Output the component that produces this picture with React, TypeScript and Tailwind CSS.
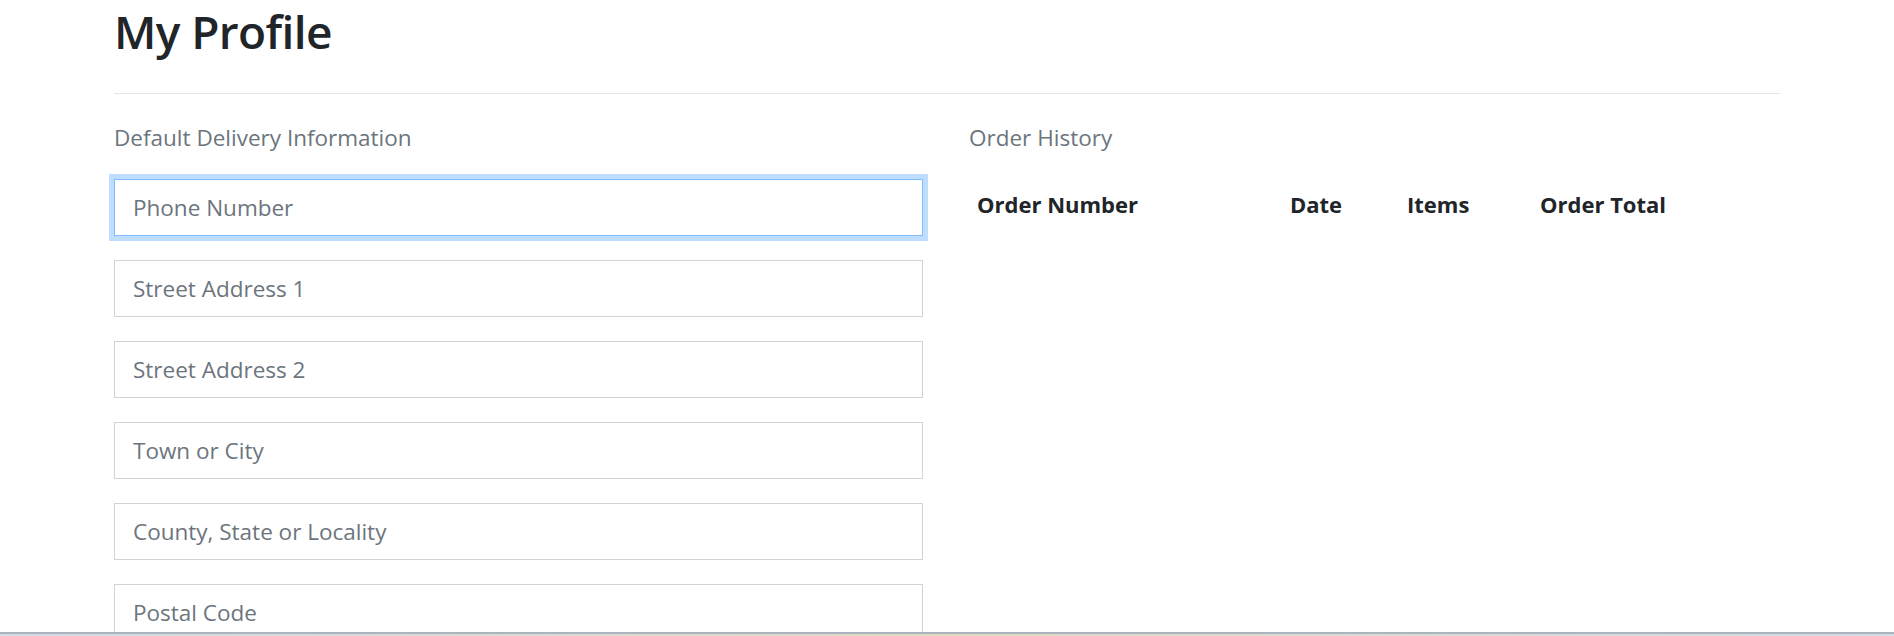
import { useState } from "react";

const fields = [
  "Phone Number",
  "Street Address 1",
  "Street Address 2",
  "Town or City",
  "County, State or Locality",
  "Postal Code",
];

export default function App() {
  const [values, setValues] = useState<Record<string, string>>({});

  return (
    <main className="relative h-screen overflow-hidden bg-white pt-[3px] font-['Open_Sans','Liberation_Sans',sans-serif] text-[#212529]">
      <section className="mx-auto w-[1666px]">
        <h1 className="text-[46px] font-semibold leading-[56px] tracking-[-0.6px]">
          My Profile
        </h1>
        <hr className="mt-[34px] border-0 border-t border-[#e6e6e6]" />

        <div className="mt-[29px] grid grid-cols-[809px_1fr] gap-x-[46px]">
          <div>
            <p className="text-[22.5px] leading-[30px] text-[#6c757d]">
              Default Delivery Information
            </p>
            <form className="mt-[26px] flex flex-col gap-6">
              {fields.map((name, i) => (
                <input
                  key={name}
                  type="text"
                  autoFocus={i === 0}
                  placeholder={name}
                  value={values[name] ?? ""}
                  onChange={(e) =>
                    setValues((v) => ({ ...v, [name]: e.target.value }))
                  }
                  className={
                    i === 0
                      ? "h-[57px] w-full border border-[#80bdff] bg-white px-[18px] text-[22.5px] text-[#495057] shadow-[0_0_0_5px_#bfdeff] outline-none placeholder:text-[#6c757d]"
                      : "h-[57px] w-full border border-[#ced4da] bg-white px-[18px] text-[22.5px] text-[#495057] outline-none placeholder:text-[#6c757d] focus:border-[#80bdff] focus:shadow-[0_0_0_5px_#bfdeff]"
                  }
                />
              ))}
            </form>
          </div>

          <div>
            <p className="text-[22.5px] leading-[30px] text-[#6c757d]">
              Order History
            </p>
            <table className="mt-[27px] w-[720px] table-fixed text-left text-[22px] leading-[33px]">
              <thead>
                <tr>
                  <th className="w-[313px] whitespace-nowrap px-[8px] py-[8px] font-bold">
                    Order Number
                  </th>
                  <th className="w-[117px] whitespace-nowrap px-[8px] py-[8px] font-bold">
                    Date
                  </th>
                  <th className="w-[133px] whitespace-nowrap px-[8px] py-[8px] font-bold">
                    Items
                  </th>
                  <th className="w-[157px] whitespace-nowrap px-[8px] py-[8px] font-bold">
                    Order Total
                  </th>
                </tr>
              </thead>
              <tbody />
            </table>
          </div>
        </div>
      </section>

      <div className="absolute inset-x-0 bottom-0 h-[4px] border-t-2 border-[#a9b4bf] bg-linear-to-r from-[#d3dbe3] via-[#e2d8c2] to-[#d3dbe3]" />
    </main>
  );
}
